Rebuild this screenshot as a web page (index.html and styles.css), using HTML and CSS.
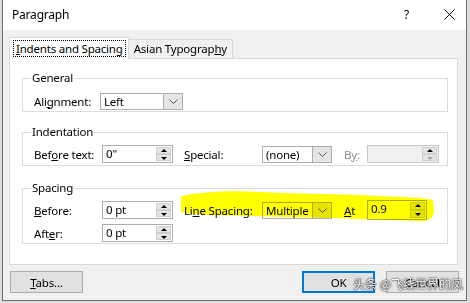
FILE: index.html
```html
<!DOCTYPE html>
<html>
<head>
<meta charset="utf-8">
<link rel="stylesheet" href="styles.css">
</head>
<body>
<div class="dialog">
  <div class="titlebar">
    <span class="title">Paragraph</span>
    <span class="help">?</span>
    <svg class="close" width="11" height="11" viewBox="0 0 11 11"><path d="M0.5 0.5 L10.5 10.5 M10.5 0.5 L0.5 10.5" stroke="#000" stroke-width="1" fill="none"/></svg>
  </div>
  <div class="body">
    <div class="tabs">
      <div class="tab active"><span class="focus"><u>I</u>ndents and Spacing</span></div>
      <div class="tab">Asian Typograp<u>h</u>y</div>
    </div>
    <div class="panel">
      <fieldset class="group g-general">
        <legend>General</legend>
        <div class="row">
          <span class="lbl">Ali<u>g</u>nment:</span>
          <div class="combo c-align"><span class="val">Left</span><span class="arrow"><svg width="9" height="5" viewBox="0 0 9 5"><path d="M0.5 0.5 L4.5 4.5 L8.5 0.5" stroke="#555" fill="none"/></svg></span></div>
        </div>
      </fieldset>
      <fieldset class="group g-indent">
        <legend>Indentation</legend>
        <div class="row">
          <span class="lbl">Bef<u>o</u>re text:</span>
          <div class="spin"><span class="val">0"</span><span class="btns"><span class="up"></span><span class="down"></span></span></div>
          <span class="lbl2"><u>S</u>pecial:</span>
          <div class="combo c-mid"><span class="val">(none)</span><span class="arrow"><svg width="9" height="5" viewBox="0 0 9 5"><path d="M0.5 0.5 L4.5 4.5 L8.5 0.5" stroke="#555" fill="none"/></svg></span></div>
          <span class="lbl3 dis">B<u>y</u>:</span>
          <div class="spin s-by disabled"><span class="val"></span><span class="btns"><span class="up"></span><span class="down"></span></span></div>
        </div>
      </fieldset>
      <fieldset class="group g-spacing">
        <legend>Spacing</legend>
        <div class="row">
          <span class="lbl"><u>B</u>efore:</span>
          <div class="spin"><span class="val">0 pt</span><span class="btns"><span class="up"></span><span class="down"></span></span></div>
          <span class="lbl2">Li<u>n</u>e Spacing:</span>
          <div class="combo c-mid"><span class="val">Multiple</span><span class="arrow"><svg width="9" height="5" viewBox="0 0 9 5"><path d="M0.5 0.5 L4.5 4.5 L8.5 0.5" stroke="#555" fill="none"/></svg></span></div>
          <span class="lbl3"><u>A</u>t</span>
          <div class="spin s-at"><span class="val">0.9</span><span class="btns"><span class="up"></span><span class="down"></span></span></div>
        </div>
        <div class="row row2">
          <span class="lbl">Aft<u>e</u>r:</span>
          <div class="spin"><span class="val">0 pt</span><span class="btns"><span class="up"></span><span class="down"></span></span></div>
        </div>
      </fieldset>
    </div>
    <div class="footer">
      <button class="btn"><u>T</u>abs...</button>
      <span class="spacer"></span>
      <button class="btn ok">OK</button>
      <button class="btn">Cancel</button>
    </div>
  </div>
  <svg class="marker" width="470" height="303" viewBox="0 0 470 303">
    <path d="M180 196 C200 192 230 190 260 192 C300 194 340 194 380 196 C405 197 425 198 432 200 L433 212 C432 218 428 221 420 221 C390 220 360 219 330 218 C290 217 250 216 210 215 C195 214 185 214 180 212 Z" fill="#ffff00"/>
  </svg>
  <div class="watermark">头条 @飞线世界的凤</div>
</div>
</body>
</html>
```
FILE: styles.css
```css
* { box-sizing: border-box; }
html, body { margin: 0; padding: 0; }
body {
  width: 470px; height: 303px; overflow: hidden;
  background: #dcdcdc;
  font-family: "Noto Sans", "Liberation Sans", sans-serif;
  font-size: 11.5px; letter-spacing: -0.2px; color: #000;
}
.dialog {
  position: relative;
  margin-left: 2px;
  width: 465px; height: 301px;
  border: 1px solid #6e6e6e;
  border-top: none;
  background: #f0f0f0;
  display: flex; flex-direction: column;
}
.titlebar {
  height: 30px; background: #fff;
  display: flex; align-items: center;
  padding-left: 9px; padding-bottom: 2px;
}
.title { font-size: 12px; flex: 1; }
.help { font-size: 12px; margin-right: 35px; }
.close { margin-right: 11px; }
.body { padding: 7px 6px 0 6px; display: flex; flex-direction: column; }
.tabs { display: flex; align-items: flex-end; height: 21px; }
.tab {
  height: 19px; padding: 0 5px; border: 1px solid #d9d9d9; border-bottom: none;
  background: #f0f0f0; line-height: 17px; white-space: nowrap;
}
.tab.active {
  height: 22px; background: #fff; position: relative; z-index: 1; margin-bottom: -1px;
  padding: 2px 3px 0 4px; border-color: #d9d9d9;
}
.focus { outline: 1px dotted #000; outline-offset: 0; padding: 0 2px; line-height: 15px; display: inline-block; }
.tab + .tab { border-left: none; }
.panel {
  width: 449px; height: 207px; background: #fff; border: 1px solid #d9d9d9;
  padding: 12px 10px 0 12px;
}
.group {
  margin: 0; border: 1px solid #dcdcdc; padding: 0 0 0 11px; width: 426px;
  position: relative;
}
.group legend { padding: 0 1px; margin-left: -3px; line-height: 14px; }
.g-general { height: 41px; padding-top: 7px; }
.g-indent { height: 41px; margin-top: 13px; padding-top: 6px; }
.g-spacing { height: 63px; margin-top: 15px; padding-top: 6px; }
.row { display: flex; align-items: center; height: 18px; }
.row2 { margin-top: 5px; }
.lbl { width: 68px; }
.g-general .lbl { width: 66px; }
.lbl2 { width: 78px; margin-left: 11px; }
.lbl3 { width: 23px; margin-left: 12px; }
.dis { color: #8d8d8d; }
.combo {
  height: 17px; border: 1px solid #adadad; display: flex; background: #fff;
}
.combo .val { flex: 1; padding-left: 3px; line-height: 15px; }
.combo .arrow {
  width: 19px; background: #e5e5e5; border-left: 1px solid #adadad;
  display: flex; align-items: center; justify-content: center;
}
.c-align { width: 83px; }
.c-mid { width: 70px; }
.spin {
  width: 71px; height: 18px; border: 1px solid #adadad; display: flex; background: #fff;
}
.spin .val { flex: 1; padding-left: 3px; line-height: 16px; }
.spin .btns { width: 16px; display: flex; flex-direction: column; padding: 1px 1px 1px 0; gap: 0; }
.btns span {
  flex: 1; background: #e5e5e5; border: 1px solid #cfcfcf; position: relative;
}
.btns .up::after, .btns .down::after {
  content: ""; position: absolute; left: 50%; top: 50%; margin-left: -3px;
  border-left: 3px solid transparent; border-right: 3px solid transparent;
}
.btns .up::after { border-bottom: 3px solid #000; margin-top: -2px; }
.btns .down::after { border-top: 3px solid #000; margin-top: -1px; }
.disabled { background: #f0f0f0; border-color: #c8c8c8; }
.disabled .btns .up::after { border-bottom-color: #000; }
.disabled .btns .down::after { border-top-color: #a0a0a0; }
.s-by { width: 72px; }
.s-at { width: 60px; height: 20px; }
.footer { display: flex; margin-top: 6px; padding-left: 1px; }
.spacer { flex: 1; }
.btn {
  font-family: inherit; font-size: 11.5px; letter-spacing: -0.2px; color: #000;
  width: 73px; height: 22px; background: #e1e1e1; border: 1px solid #adadad;
  padding: 0; margin: 0;
}
.btn.ok { border: 2px solid #0078d7; margin-right: 11px; }
.footer .btn:last-child { margin-right: 1px; }
.marker {
  position: absolute; left: -2px; top: 0; pointer-events: none;
  mix-blend-mode: multiply;
}
.watermark {
  position: absolute; left: 350px; top: 275px;
  font-family: "Noto Sans CJK SC", sans-serif; font-size: 12px; letter-spacing: 0; color: #fff;
  text-shadow: 0 0 2px #000, 0 0 1px #000;
  white-space: nowrap;
}
```
